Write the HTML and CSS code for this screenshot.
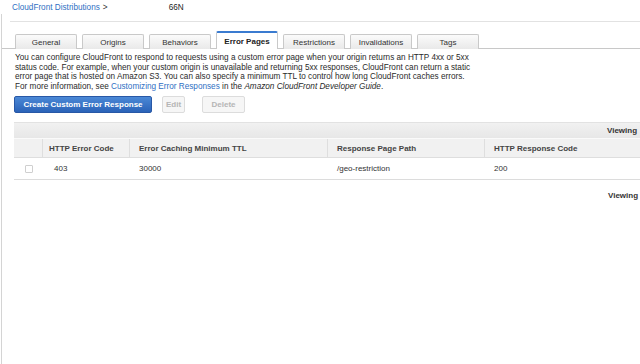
FILE: index.html
```html
<!DOCTYPE html>
<html>
<head>
<meta charset="utf-8">
<link rel="stylesheet" href="styles.css">
</head>
<body>
<div class="crumbs">
  <a class="link" href="#">CloudFront Distributions</a><span class="sep">&gt;</span>
  <span class="dist">66N</span>
</div>
<div class="panel">
  <div class="rule"></div>
  <div class="tabs">
    <div class="tab">General</div>
    <div class="tab">Origins</div>
    <div class="tab">Behaviors</div>
    <div class="tab active">Error Pages</div>
    <div class="tab">Restrictions</div>
    <div class="tab">Invalidations</div>
    <div class="tab">Tags</div>
  </div>
  <p class="intro">You can configure CloudFront to respond to requests using a custom error page when your origin returns an HTTP 4xx or 5xx<br>status code. For example, when your custom origin is unavailable and returning 5xx responses, CloudFront can return a static<br>error page that is hosted on Amazon S3. You can also specify a minimum TTL to control how long CloudFront caches errors.<br>For more information, see <a class="link" href="#">Customizing Error Responses</a> in the <i>Amazon CloudFront Developer Guide</i>.</p>
  <div class="actions">
    <button class="btn primary">Create Custom Error Response</button>
    <button class="btn disabled">Edit</button>
    <button class="btn disabled">Delete</button>
  </div>
  <div class="grid">
    <div class="bar"><span class="viewing">Viewing</span></div>
    <div class="row head">
      <div class="cell c0"></div>
      <div class="cell c1">HTTP Error Code</div>
      <div class="cell c2">Error Caching Minimum TTL</div>
      <div class="cell c3">Response Page Path</div>
      <div class="cell c4">HTTP Response Code</div>
    </div>
    <div class="row data">
      <div class="cell c0"><span class="check"></span></div>
      <div class="cell c1 code">403</div>
      <div class="cell c2">30000</div>
      <div class="cell c3">/geo-restriction</div>
      <div class="cell c4">200</div>
    </div>
    <div class="footer"><span class="viewing">Viewing</span></div>
  </div>
</div>
</body>
</html>
```
FILE: styles.css
```css
html, body {
  margin: 0;
  padding: 0;
  background: #fff;
  overflow: hidden;
  height: 364px;
}
body {
  font-family: "Liberation Sans", Arial, sans-serif;
  font-size: 8px;
  color: #2a2a2a;
}
.link {
  color: #2f6fc3;
  text-decoration: none;
}
.crumbs {
  height: 14px;
  padding-left: 12px;
  display: flex;
  align-items: center;
  padding-top: 1px;
  box-sizing: border-box;
  font-size: 8.2px;
}
.sep {
  margin-left: 3px;
  color: #333;
}
.dist {
  margin-left: 61px;
  color: #222;
}
.panel {
  margin-left: 1px;
  border-left: 1px solid #d4d4d4;
  height: 350px;
}
.rule {
  margin-left: 8px;
  padding-top: 7px;
  border-bottom: 1px solid #e2e2e2;
}
.tabs {
  margin-top: 10px;
  display: flex;
  align-items: flex-end;
  gap: 5px;
  padding-left: 13px;
  border-bottom: 1px solid #c8c8c8;
  height: 16px;
}
.tab {
  width: 62px;
  height: 15px;
  box-sizing: border-box;
  border: 1px solid #c9c9c9;
  border-bottom: none;
  border-radius: 2px 2px 0 0;
  background: linear-gradient(#fbfbfb, #e9e9e9);
  display: flex;
  align-items: center;
  justify-content: center;
  color: #333;
  margin-bottom: -1px;
}
.tab.active {
  height: 18px;
  background: #fff;
  border-top: 2px solid #3a7bd0;
  font-weight: bold;
  color: #222;
}
.intro {
  margin: 4px 0 0 0;
  padding-left: 13px;
  font-size: 8.2px;
  line-height: 9.5px;
  color: #2a2a2a;
}
.actions {
  margin-top: 5px;
  padding-left: 12px;
  display: flex;
}
.btn {
  font-family: inherit;
  font-size: 8px;
  font-weight: bold;
  height: 17px;
  border-radius: 2px;
  padding: 0;
  box-sizing: border-box;
}
.btn.primary {
  width: 138px;
  color: #fff;
  background: linear-gradient(#4b88d6, #2b63b8);
  border: 1px solid #2858a6;
}
.btn.disabled {
  color: #b5b5b5;
  background: #f6f6f6;
  border: 1px solid #dcdcdc;
}
.btn.disabled:nth-child(2) {
  width: 23px;
  margin-left: 10px;
}
.btn.disabled:nth-child(3) {
  width: 43px;
  margin-left: 17px;
}
.grid {
  margin-top: 9px;
  margin-left: 12px;
  width: 800px;
}
.bar {
  height: 16px;
  background: linear-gradient(#f1f1f1, #e7e7e7);
  border-top: 1px solid #e2e2e2;
  box-sizing: border-box;
  display: flex;
  align-items: center;
  padding-left: 593px;
}
.viewing {
  font-weight: bold;
  color: #333;
}
.row {
  display: grid;
  grid-template-columns: 28px 87px 198px 157px 1fr;
}
.row.head {
  height: 20px;
  background: #f1f1f1;
  border-top: 1px solid #fafafa;
  border-bottom: 1px solid #dedede;
  box-sizing: border-box;
  font-weight: bold;
  color: #444;
}
.row.head .cell + .cell {
  border-left: 1px solid #dedede;
}
.row.data {
  height: 22px;
  border-bottom: 1px solid #dcdcdc;
  box-sizing: border-box;
  color: #333;
}
.cell {
  display: flex;
  align-items: center;
  padding-left: 9px;
}
.head .c1 { padding-left: 6px; }
.c0 { padding-left: 11px; }
.data .c1 { padding-left: 11px; }
.data .cell + .cell { border-left: 1px solid transparent; }
.check {
  width: 6px;
  height: 6px;
  border: 1px solid #cfcfcf;
  border-radius: 1px;
  background: #fff;
}
.footer {
  height: 30px;
  display: flex;
  align-items: center;
  padding-left: 594px;
}
```
